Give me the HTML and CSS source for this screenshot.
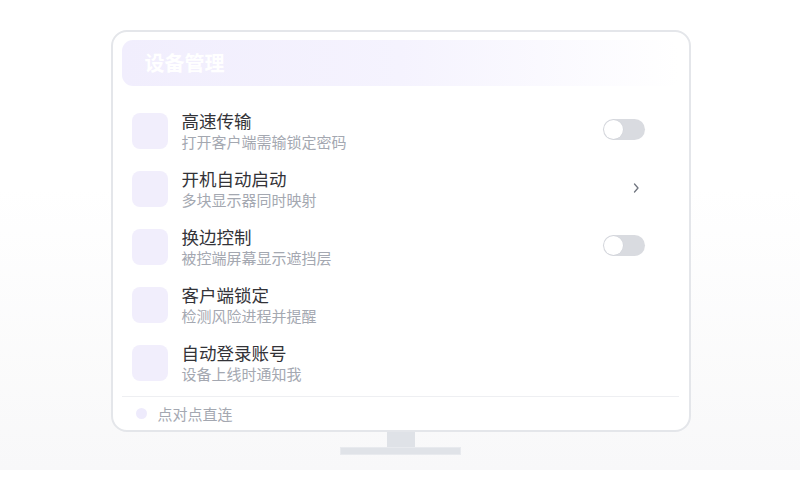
FILE: index.html
```html
<!DOCTYPE html>
<html lang="zh">
<head>
<meta charset="utf-8">
<link rel="stylesheet" href="styles.css">
</head>
<body>
<div class="stage">
  <div class="monitor">
    <div class="screen">
      <div class="header">设备管理</div>
      <div class="list">
        <div class="row">
          <div class="icon"></div>
          <div class="text"><div class="title">高速传输</div><div class="sub">打开客户端需输锁定密码</div></div>
          <div class="toggle"><span class="knob"></span></div>
        </div>
        <div class="row">
          <div class="icon"></div>
          <div class="text"><div class="title">开机自动启动</div><div class="sub">多块显示器同时映射</div></div>
          <svg class="chev" width="8" height="12" viewBox="0 0 8 12"><path d="M2.5 2 L6 6 L2.5 10" fill="none" stroke="#70757f" stroke-width="1.3" stroke-linecap="round" stroke-linejoin="round"/></svg>
        </div>
        <div class="row">
          <div class="icon"></div>
          <div class="text"><div class="title">换边控制</div><div class="sub">被控端屏幕显示遮挡层</div></div>
          <div class="toggle"><span class="knob"></span></div>
        </div>
        <div class="row">
          <div class="icon"></div>
          <div class="text"><div class="title">客户端锁定</div><div class="sub">检测风险进程并提醒</div></div>
        </div>
        <div class="row">
          <div class="icon"></div>
          <div class="text"><div class="title">自动登录账号</div><div class="sub">设备上线时通知我</div></div>
        </div>
      </div>
      <div class="footer"><span class="dot"></span><span class="ftext">点对点直连</span></div>
    </div>
    <div class="neck"></div>
    <div class="base"></div>
  </div>
</div>
</body>
</html>
```

FILE: styles.css
```css
* { box-sizing: border-box; }
html, body { margin: 0; padding: 0; background: #fff; }
body { font-family: "Noto Sans CJK SC", "Noto Sans", sans-serif; }
.stage {
  height: 470px;
  background: linear-gradient(to bottom, #ffffff 0%, #ffffff 40%, #f8f8f9 100%);
  padding-top: 30px;
  display: flex;
  justify-content: center;
}
.monitor { display: flex; flex-direction: column; align-items: center; width: 580px; margin-left: 1px; }
.screen {
  width: 580px;
  height: 402px;
  border: 2px solid #e4e6ea;
  border-radius: 16px;
  background: #fff;
  padding: 8px 10px 0 9px;
  display: flex;
  flex-direction: column;
}
.header {
  height: 46px;
  border-radius: 11px;
  background: linear-gradient(to right, #f1eefd 0%, #f5f3fe 50%, #ffffff 100%);
  color: #ffffff;
  font-size: 20px;
  font-weight: 700;
  line-height: 46px;
  padding-left: 23px;
}
.list { margin-top: 16px; display: flex; flex-direction: column; }
.row {
  height: 58px;
  display: flex;
  align-items: center;
  padding: 0 34px 0 10px;
}
.icon { width: 36px; height: 36px; border-radius: 8px; background: #f1eefc; flex: none; }
.text { flex: 1; margin-left: 14px; display: flex; flex-direction: column; margin-top: -1px; }
.title { font-size: 17.5px; line-height: 22px; color: #333338; }
.sub { font-size: 15px; line-height: 19px; color: #a4a8b1; }
.toggle {
  width: 42px; height: 21px; border-radius: 11px; background: #d9dbe0;
  position: relative; flex: none; margin-top: -3px;
}
.knob {
  position: absolute; left: 1px; top: 1px; width: 19px; height: 19px; border-radius: 50%;
  background: #fff; box-shadow: 0 0 0 0.5px #cfd2d8;
}
.chev { flex: none; margin-right: 5px; margin-top: -3px; }
.footer {
  margin-top: 4px;
  border-top: 1px solid #eeeff2;
  height: 33px;
  display: flex;
  align-items: center;
  padding-left: 14px;
}
.dot { width: 11px; height: 11px; border-radius: 50%; background: #eeebfc; }
.ftext { margin-left: 11px; font-size: 15px; color: #a4a8b1; }
.neck { width: 28px; height: 15px; background: #dfe2e7; }
.base { width: 121px; height: 8px; background: #e0e3e8; border: 1px solid #e8eaee; }
```
